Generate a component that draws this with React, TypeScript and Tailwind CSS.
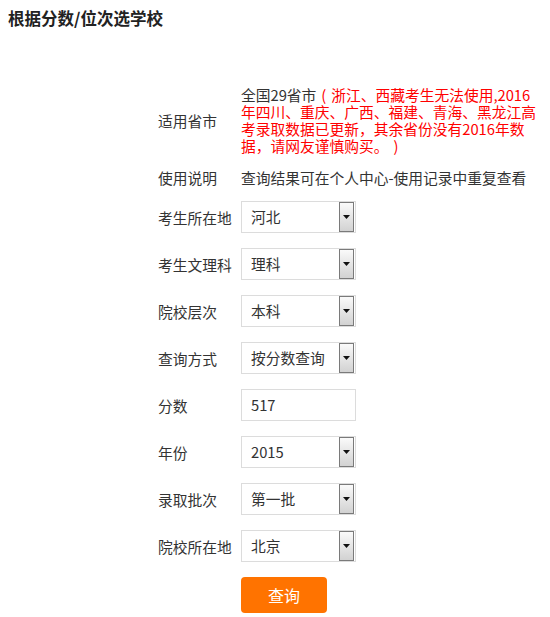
import React from "react";

const font = {
  fontFamily: '"Microsoft YaHei", "Noto Sans CJK SC", "Noto Sans", sans-serif',
};

function Arrow() {
  return (
    <div className="flex h-[30px] w-[15px] shrink-0 items-center justify-center border border-[#7a7a7a] bg-gradient-to-b from-[#fafafa] to-[#d2d2d2]">
      <svg width={7} height={4} viewBox="0 0 7 4" aria-hidden>
        <path d="M0 0h7L3.5 4z" fill="#111" />
      </svg>
    </div>
  );
}

function Select({ value }: { value: string }) {
  return (
    <div className="flex h-[32px] w-[115px] items-center border border-[#dcdcdc] bg-white pr-px text-[14.75px] text-[#333]">
      <span className="flex-1 pl-[9px]">{value}</span>
      <Arrow />
    </div>
  );
}

function Row({ label, children }: { label: string; children: React.ReactNode }) {
  return (
    <div className="flex items-center">
      <div className="w-[83px] shrink-0 text-[14.75px] leading-[17px] text-[#333]">{label}</div>
      {children}
    </div>
  );
}

const selects: [string, string][] = [
  ["考生所在地", "河北"],
  ["考生文理科", "理科"],
  ["院校层次", "本科"],
  ["查询方式", "按分数查询"],
];

export default function App() {
  return (
    <div className="min-h-[617px] w-[550px] bg-white" style={font}>
      <h1 className="pl-2 pt-[8px] text-[16.5px] font-bold leading-[20px] text-[#222]">
        根据分数/位次选学校
      </h1>

      <div className="mt-[58px] flex flex-col gap-[15px] pl-[158px]">
        <Row label="适用省市">
          <p className="w-[300px] text-[14.75px] leading-[17px] text-[#333]">
            全国29省市
            <span className="text-[#ff0000]">
              <span className="inline-block w-[1em] text-center">(</span>
              浙江、西藏考生无法使用,2016年四川、重庆、广西、福建、青海、黑龙江高考录取数据已更新，其余省份没有2016年数据，请网友谨慎购买。
              <span className="inline-block w-[1em] text-center">)</span>
            </span>
          </p>
        </Row>

        <Row label="使用说明">
          <p className="text-[14.75px] leading-[17px] text-[#333]">查询结果可在个人中心-使用记录中重复查看</p>
        </Row>

        {selects.map(([label, value]) => (
          <Row key={label} label={label}>
            <Select value={value} />
          </Row>
        ))}

        <Row label="分数">
          <div className="flex h-[32px] w-[115px] items-center border border-[#dcdcdc] bg-white pl-[9px] text-[14.75px] text-[#333]">
            517
          </div>
        </Row>

        <Row label="年份">
          <Select value="2015" />
        </Row>
        <Row label="录取批次">
          <Select value="第一批" />
        </Row>
        <Row label="院校所在地">
          <Select value="北京" />
        </Row>

        <div className="pl-[83px]">
          <button
            type="button"
            className="h-[36px] w-[86px] rounded-[4px] bg-[#ff7300] text-[16px] text-white"
          >
            查询
          </button>
        </div>
      </div>
    </div>
  );
}
